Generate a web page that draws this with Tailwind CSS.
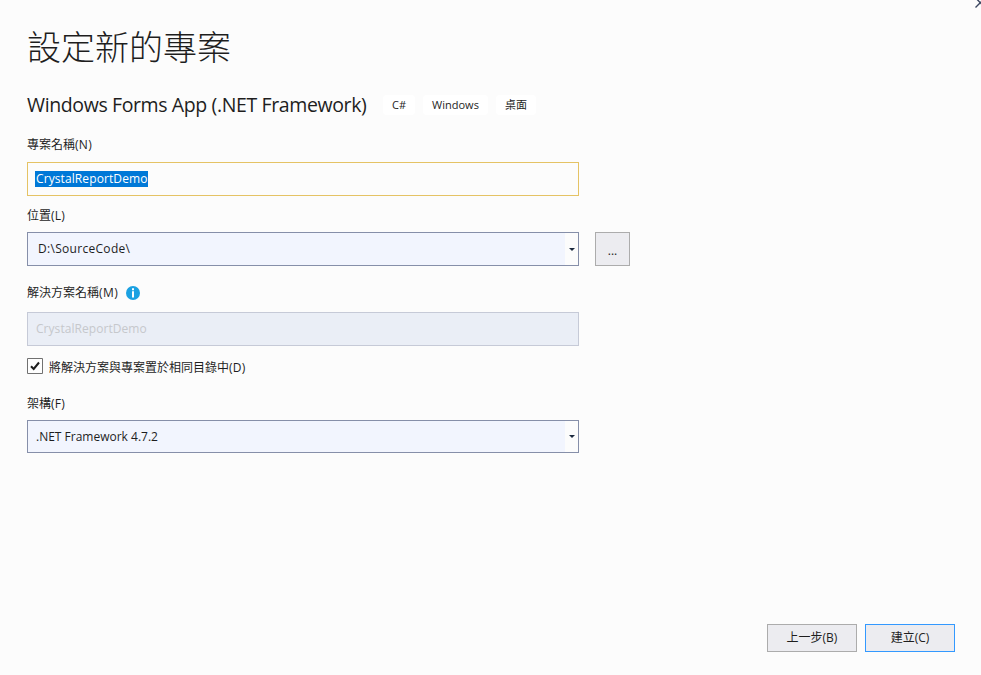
<!DOCTYPE html>
<html lang="zh-Hant">
<head>
<meta charset="utf-8">
<title>設定新的專案</title>
<script src="https://cdn.jsdelivr.net/npm/@tailwindcss/browser@4"></script>
</head>
<body class="bg-[#fcfcfc]">
<main class="relative flex h-[675px] w-[981px] flex-col overflow-hidden bg-[#fcfcfc] pl-[27px] pt-[27px] font-['Open_Sans','Noto_Sans_CJK_TC',sans-serif] text-[12px] text-[#1e1e1e]">
  <svg class="absolute left-[975px] top-0" width="6" height="8" viewBox="0 0 6 8" fill="none" stroke="#3b4660" stroke-width="1.4"><path d="M.5 7.5 8 0M1.2-1.5 8 5.5"/></svg>
  <h1 class="h-10 text-[34px] font-light leading-10">設定新的專案</h1>
  <div class="mt-[26px] flex h-6 items-center">
    <h2 class="w-[356px] whitespace-nowrap text-[19.5px] leading-6 tracking-[-0.38px]">Windows Forms App (.NET Framework)</h2>
    <div class="flex gap-2 text-[11px] leading-5">
      <span class="h-5 w-8 rounded-[4px] bg-white text-center">C#</span>
      <span class="h-5 w-[65px] rounded-[4px] bg-white text-center">Windows</span>
      <span class="h-5 w-10 rounded-[4px] bg-white text-center">桌面</span>
    </div>
  </div>
  <label class="mt-[18px] h-5 leading-5">專案名稱<span class="tracking-[0.3px]">(N)</span></label>
  <div class="mt-[7px] flex h-[34px] w-[552px] items-center border border-[#e5c365] pl-[7px]"><span class="h-4 bg-[#0078d7] pl-px leading-[15px] tracking-[0.1px] text-white">CrystalReportDemo</span></div>
  <label class="mt-[10px] h-5 leading-5">位置<span class="tracking-[0.2px]">(L)</span></label>
  <div class="mt-[6px] flex gap-4">
    <div class="flex h-[34px] w-[552px] items-center border border-[#868fa9] bg-[#f2f5fe] pl-[10px]"><span class="grow tracking-[0.3px]">D:\SourceCode\</span>
      <span class="flex h-full w-[13px] items-center justify-center bg-[#fcfcfc]"><svg width="6" height="3" viewBox="0 0 6 3" fill="#1b293e"><path d="M0 0h6L3 3z"/></svg></span>
    </div>
    <button class="h-[34px] w-[35px] border border-[#acacac] bg-[#ececf0] pt-[3px]">...</button>
  </div>
  <div class="mt-[17px] flex h-5 items-center gap-[7px]"><label class="leading-5">解決方案名稱<span class="tracking-[0.5px]">(M)</span></label>
    <svg class="ml-px" width="14" height="14" viewBox="0 0 14 14"><circle cx="7" cy="7" r="7" fill="#1ba1e2"/><path d="M6 2.2h2v2H6zM6 5.2h2v6.3H6z" fill="#fff"/></svg>
  </div>
  <div class="mt-[9px] flex h-[34px] w-[552px] items-center border border-[#c6cad7] bg-[#eaeef6] pl-2 tracking-[0.05px] text-[#c6c8cc]">CrystalReportDemo</div>
  <div class="mt-[12px] flex h-4 items-center gap-[6px]">
    <svg width="16" height="16" viewBox="0 0 16 16"><path d="M.5.5h15v15H.5z" fill="#fefefe" stroke="#717171"/><path d="m4 8.2 2.7 2.8L12 4.5" fill="none" stroke="#1e1e1e" stroke-width="2"/></svg>
    <label class="mt-[3px] leading-5">將解決方案與專案置於相同目錄中<span class="tracking-[0.2px]">(D)</span></label>
  </div>
  <label class="mt-[20px] h-5 leading-5">架構<span class="tracking-[0.2px]">(F)</span></label>
  <div class="mt-[6px] flex h-[33px] w-[552px] items-center border border-[#868fa9] bg-[#f2f5fe] pl-2"><span class="grow">.NET Framework 4.7.2</span>
    <span class="flex h-full w-[13px] items-center justify-center bg-[#fcfcfc]"><svg width="6" height="3" viewBox="0 0 6 3" fill="#1b293e"><path d="M0 0h6L3 3z"/></svg></span>
  </div>
  <footer class="mb-[23px] mr-[26px] mt-auto flex justify-end gap-2">
    <button class="h-7 w-[90px] border border-[#acacac] bg-[#ececf0]">上一步(B)</button>
    <button class="h-7 w-[90px] border border-[#3399ff] bg-[#ececf0]">建立(C)</button>
  </footer>
</main>
</body>
</html>
